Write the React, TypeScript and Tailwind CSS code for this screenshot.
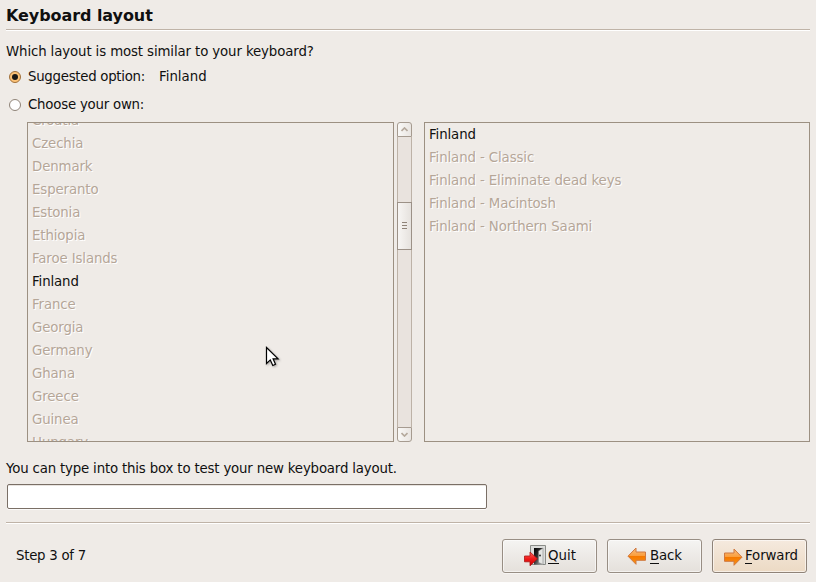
import React from 'react';

const countries = [
  'Croatia', 'Czechia', 'Denmark', 'Esperanto', 'Estonia', 'Ethiopia', 'Faroe Islands', 'Finland',
  'France', 'Georgia', 'Germany', 'Ghana', 'Greece', 'Guinea', 'Hungary',
];

const variants = [
  'Finland', 'Finland - Classic', 'Finland - Eliminate dead keys', 'Finland - Macintosh', 'Finland - Northern Saami',
];

function Row({ label }: { label: string }) {
  return (
    <li
      className={
        'h-[23px] shrink-0 pl-1 leading-[23px] whitespace-nowrap ' +
        (label === 'Finland' ? 'text-[#101010]' : 'text-[#b5a698] [text-shadow:1px_1px_0_#fff]')
      }
    >
      {label}
    </li>
  );
}

function Radio({ checked }: { checked?: boolean }) {
  return (
    <span
      className={
        'flex size-3 shrink-0 items-center justify-center rounded-full border ' +
        (checked ? 'border-[#a0703c] bg-[#fdc377]' : 'border-[#8f8378] bg-white')
      }
    >
      {checked && <span className="size-[5.4px] rounded-full bg-[#1b1916]" />}
    </span>
  );
}

function Separator() {
  return <div className="h-[2px] shrink-0 border-b border-white bg-[#bfb3a7]" />;
}

function ScrollButton({ up }: { up?: boolean }) {
  return (
    <div
      className={
        'flex h-[15px] shrink-0 items-center justify-center border border-[#a69b90] bg-linear-to-r from-[#f9f8f6] to-[#e9e5e1] ' +
        (up ? 'rounded-t-[3px]' : 'rounded-b-[3px]')
      }
    >
      <svg width="7" height="5" viewBox="0 0 7 5" fill="none" stroke="#b5a99c" strokeWidth="1.7">
        <path d={up ? 'M.5 4 3.5 1l3 3' : 'M.5 1l3 3 3-3'} />
      </svg>
    </div>
  );
}

function QuitIcon() {
  return (
    <svg width="24" height="24" viewBox="0 0 24 24">
      <defs>
        <linearGradient id="door" x1="0" y1="0" x2="1" y2="1">
          <stop offset="0" stopColor="#000" />
          <stop offset=".45" stopColor="#333" />
          <stop offset="1" stopColor="#ccc" />
        </linearGradient>
        <linearGradient id="red" x1="0" y1="0" x2="0" y2="1">
          <stop offset="0" stopColor="#ff6a60" />
          <stop offset=".5" stopColor="#f01818" />
          <stop offset="1" stopColor="#cc0000" />
        </linearGradient>
      </defs>
      <path d="M7.5 1.5h15v19h-15z" fill="#dcdddb" stroke="#8a8c88" />
      <path d="M11 4h9v16.5h-9z" fill="url(#door)" />
      <path d="M15.5 7 20 4v16.5l-4.5-2z" fill="#e4e5e3" stroke="#777" strokeWidth=".5" />
      <circle cx="17" cy="11.5" r=".9" fill="#222" />
      <path d="M1.5 12H7V8l7.5 6.8L7 21.8v-4H1.5z" fill="url(#red)" stroke="#a91515" strokeWidth=".8" strokeLinejoin="round" />
    </svg>
  );
}

function ArrowIcon({ back }: { back?: boolean }) {
  return (
    <svg width="20" height="20" viewBox="0 0 20 20" className={back ? '' : 'mt-[2px]'}>
      <defs>
        <linearGradient id="orange" x1="0" y1="0" x2="0" y2="1">
          <stop offset="0" stopColor="#f9bd7e" />
          <stop offset=".48" stopColor="#fa9e3c" />
          <stop offset=".52" stopColor="#f57900" />
          <stop offset="1" stopColor="#fb9411" />
        </linearGradient>
      </defs>
      <path
        transform={back ? 'matrix(-1 0 0 1 20 0)' : undefined}
        d="M1.5 6H11V2l8 8.2L11 18.3v-4H1.5z"
        fill="url(#orange)"
        stroke="#cf7840"
        strokeLinejoin="round"
      />
    </svg>
  );
}

function ActionButton({ icon, label, primary, className }: {
  icon: React.ReactNode; label: string; primary?: boolean; className: string;
}) {
  return (
    <button
      className={
        'flex h-[34px] w-[95px] items-center rounded-[3px] border shadow-[inset_0_0_0_1px_#ffffff90,0_1px_0_#ffffff80] ' +
        (primary
          ? 'border-[#8f8378] bg-linear-to-b from-[#f5eade] to-[#ecdac4] '
          : 'border-[#988e84] bg-linear-to-b from-[#f5f4f2] to-[#e5e0db] ') +
        className
      }
    >
      {icon}
      <span className="-mt-px whitespace-nowrap">
        <span className="border-b border-[#101010]">{label[0]}</span>
        {label.slice(1)}
      </span>
    </button>
  );
}

export default function App() {
  return (
    <main className="relative flex h-[582px] w-[816px] flex-col overflow-hidden bg-[#efebe7] px-[6px] font-['DejaVu_Sans',sans-serif] text-[13.33px] text-[#101010]">
      <h1 className="h-[29px] shrink-0 text-[16px] leading-[32px] font-bold tracking-[-0.07px]">Keyboard layout</h1>
      <Separator />
      <p className="mt-[11px] h-5 shrink-0 leading-5 tracking-[-0.12px]">Which layout is most similar to your keyboard?</p>
      <label className="mt-[5px] flex h-5 shrink-0 items-center pl-[3px]">
        <Radio checked />
        <span className="ml-[7px] w-[131px] tracking-[-0.28px]">Suggested option:</span>
        <span>Finland</span>
      </label>
      <label className="mt-[8px] flex h-5 shrink-0 items-center pl-[3px]">
        <Radio />
        <span className="ml-[7px] tracking-[-0.22px]">Choose your own:</span>
      </label>

      <section className="mt-[7px] flex h-[320px] shrink-0 pl-[21px]">
        <div className="w-[367px] overflow-hidden border border-[#9c9082]">
          <ul className="-mt-[14px] flex flex-col tracking-[-0.12px]">
            {countries.map((c) => <Row key={c} label={c} />)}
          </ul>
        </div>
        <div className="ml-[3px] flex w-[15px] flex-col">
          <ScrollButton up />
          <div className="flex-1 border-x border-[#bdb2a7] bg-[#e9e3de]">
            <div className="-mx-px mt-[65px] flex h-[48px] flex-col items-center justify-center gap-[2px] border border-[#9c9187] bg-linear-to-r from-[#f7f5f3] to-[#e6e2de] pb-[2px]">
              <span className="h-px w-[5px] bg-[#8f8378]" />
              <span className="h-px w-[5px] bg-[#8f8378]" />
              <span className="h-px w-[5px] bg-[#8f8378]" />
            </div>
          </div>
          <ScrollButton />
        </div>
        <div className="ml-3 w-[386px] overflow-hidden border border-[#9c9082]">
          <ul className="flex flex-col tracking-[-0.11px]">
            {variants.map((v) => <Row key={v} label={v} />)}
          </ul>
        </div>
      </section>

      <p className="mt-[17px] h-5 shrink-0 leading-5 tracking-[-0.175px]">You can type into this box to test your new keyboard layout.</p>
      <input
        className="mt-[5px] mb-[13px] ml-px h-[25px] w-[480px] shrink-0 rounded-[2px] border border-[#7a6f66] bg-white px-1 shadow-[inset_0_1px_0_#e8e4e0,0_1px_0_#fbfaf9] outline-none"
        aria-label="Keyboard test"
      />
      <Separator />
      <footer className="mt-[15px] flex h-[34px] shrink-0 items-center gap-[10px] pr-[3px] pl-[10px]">
        <span className="mr-auto tracking-[-0.27px]">Step 3 of 7</span>
        <ActionButton icon={<QuitIcon />} label="Quit" className="gap-px pl-[20px]" />
        <ActionButton icon={<ArrowIcon back />} label="Back" className="gap-[3px] pl-[19px] tracking-[-0.1px]" />
        <ActionButton icon={<ArrowIcon />} label="Forward" primary className="gap-[2px] pl-[10px] tracking-[-0.1px]" />
      </footer>

      <svg className="absolute top-[346px] left-[265px] drop-shadow-[1px_1px_1px_#00000050]" width="15" height="23" viewBox="0 0 15 23">
        <path d="M1.5 1.5v16l3.8-3.6 2.5 5.6 2.7-1.2-2.4-5.5h5z" fill="#fff" stroke="#000" strokeWidth="1.2" />
      </svg>
    </main>
  );
}
